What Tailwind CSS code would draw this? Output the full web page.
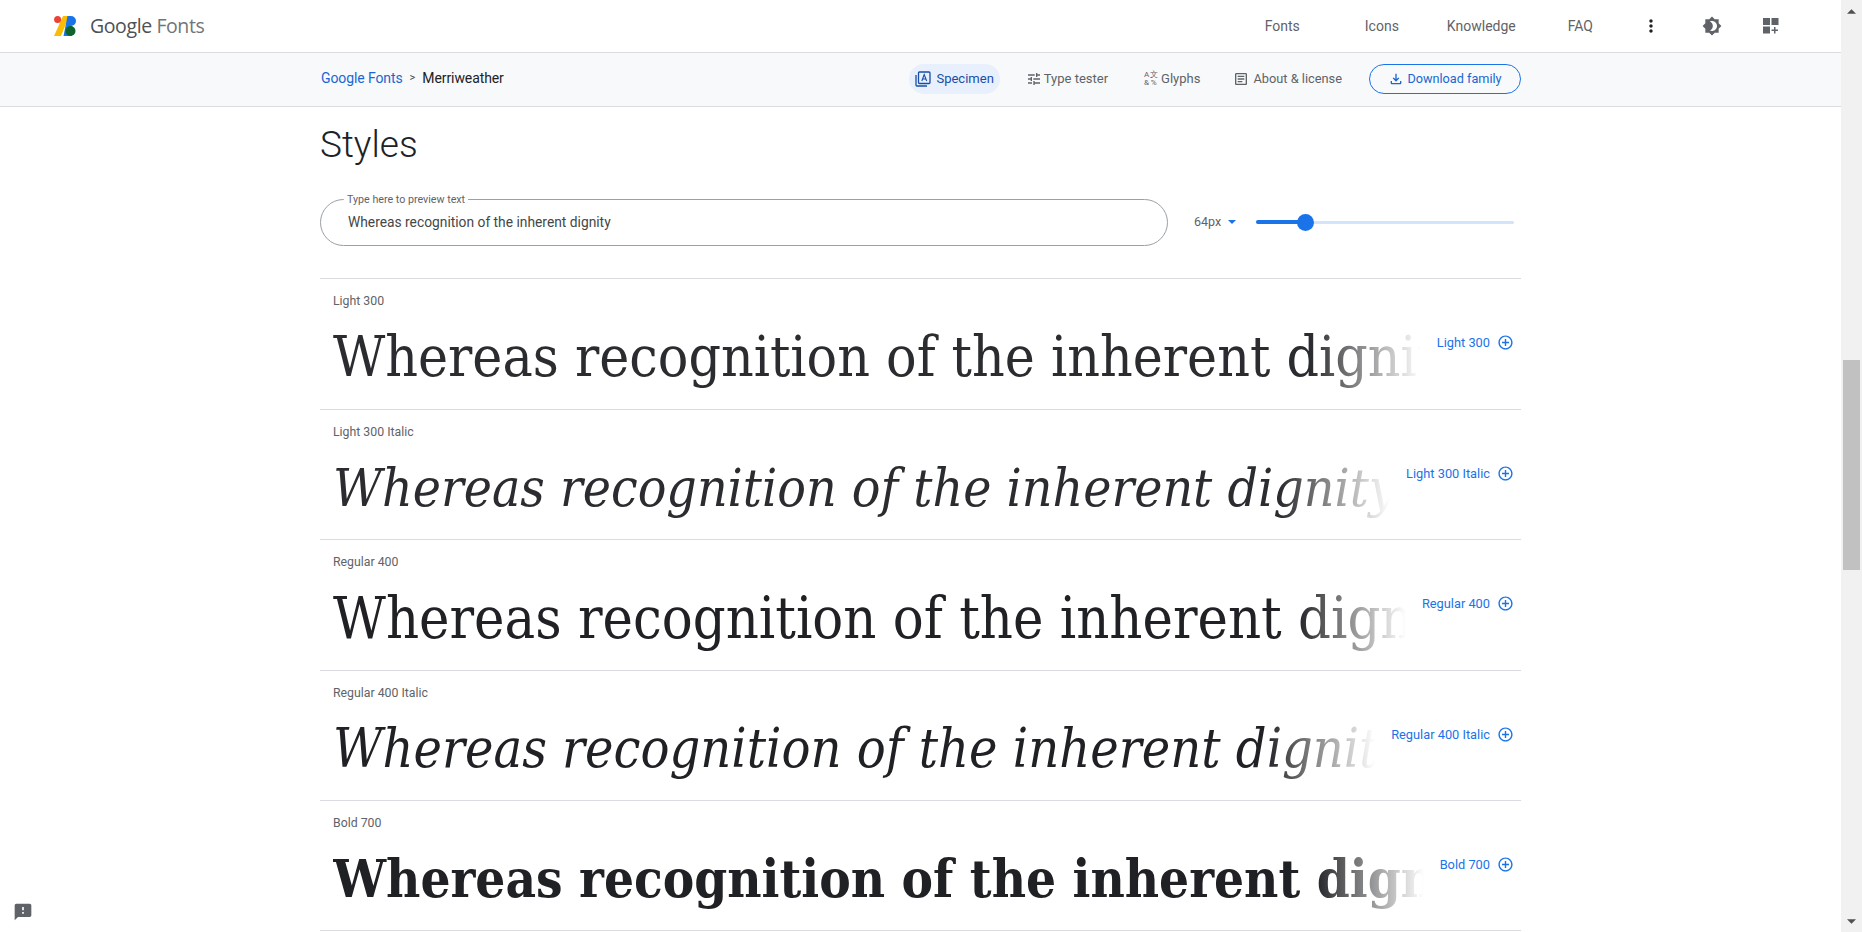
<!DOCTYPE html>
<html lang="en">
<head>
    <meta charset="UTF-8">
    <title>Merriweather - Google Fonts</title>
    <script src="https://cdn.jsdelivr.net/npm/@tailwindcss/browser@4"></script>
</head>
<body class="bg-white font-['Roboto',sans-serif] overflow-hidden">
<div class="flex h-[932px] relative">
    <div class="flex-1 min-w-0 flex flex-col">
        <!-- Top bar -->
        <header class="h-[53px] border-b border-[#dadce0] flex items-center pl-[54px] text-[#5f6368]">
            <svg class="w-[22px] h-[22px]" viewBox="0 0 22 22">
                <path fill="#fbbc04" d="M0 21 9 1h6L7 21z"/>
                <circle fill="#ea4335" cx="3.600" cy="4.600" r="3.500"/>
                <path fill="#1a73e8" d="M13.500 1h3.500a5 5 0 0 1 0 10h1v10h-8.500z"/>
                <circle fill="#0d652d" cx="16.500" cy="16" r="5"/>
            </svg>
            <span class="ml-[14px] text-[19.500px] font-['Open_Sans',sans-serif] tracking-[-0.4px]"><span class="text-[#4d5156]">Google</span> <span class="text-[#70757a]">Fonts</span></span>
            <nav class="ml-auto flex items-center text-[14px]">
                <a class="mr-[65px]">Fonts</a>
                <a class="mr-[48px]">Icons</a>
                <a class="mr-[52px]">Knowledge</a>
                <a class="mr-[48px]">FAQ</a>
                <svg class="w-5 h-5 mr-[41px] text-[#202124]" viewBox="0 0 24 24" fill="currentColor"><path d="M12 8c1.100 0 2-.9 2-2s-.9-2-2-2-2 .9-2 2 .9 2 2 2zm0 2c-1.100 0-2 .9-2 2s.9 2 2 2 2-.9 2-2-.9-2-2-2zm0 6c-1.100 0-2 .9-2 2s.9 2 2 2 2-.9 2-2-.9-2-2-2z"/></svg>
                <svg class="w-5 h-5 mr-[41px]" viewBox="0 0 24 24" fill="currentColor"><path d="M20 8.690V4h-4.690L12 .69 8.690 4H4v4.690L.69 12 4 15.310V20h4.690L12 23.310 15.310 20H20v-4.690L23.310 12 20 8.690zM12 18c-.89 0-1.740-.2-2.500-.55C11.560 16.500 13 14.420 13 12s-1.440-4.500-3.500-5.450C10.260 6.200 11.110 6 12 6c3.310 0 6 2.690 6 6s-2.690 6-6 6z"/></svg>
                <svg class="w-4 h-4 mr-[62px]" viewBox="0 0 16 16" fill="currentColor"><rect width="7" height="7"/><rect x="8.500" width="7" height="7"/><rect y="8.500" width="7" height="7"/><path d="M11 9h1.500v2.500H15V13h-2.500v2.500H11V13H8.500v-1.500H11z"/></svg>
            </nav>
        </header>

        <!-- Sub nav -->
        <div class="h-[54px] bg-[#f8f9fa] border-b border-[#dadce0] shrink-0">
            <div class="w-[1201px] ml-[320px] h-full pb-[2px] flex items-center text-[13px] text-[#5f6368]">
                <span class="text-[#1967d2] text-[14px] tracking-[-0.1px] ml-[1px]">Google Fonts</span>
                <span class="mx-[7px] text-[11px] text-[#3c4043]">&gt;</span>
                <span class="text-[#202124] text-[14px] tracking-[-0.1px]">Merriweather</span>
                <div class="ml-auto flex items-center">
                    <span class="flex items-center h-[30px] px-[6px] rounded-full bg-[#e8f0fe] text-[#174ea6] mr-[26px]">
                        <svg class="w-4 h-4 mr-[5px]" viewBox="0 0 16 16" fill="none" stroke="currentColor" stroke-width="1.300"><rect x="3.500" y="1" width="11.500" height="11.500" rx="1"/><path d="M1 4v10a1 1 0 0 0 1 1h10"/><path d="M6.800 10 9.200 3.500 11.700 10M7.700 8h3" stroke-width="1.100"/></svg>
                        Specimen
                    </span>
                    <span class="flex items-center mr-[35px]">
                        <svg class="w-4 h-4 mr-[2px]" viewBox="0 0 24 24" fill="currentColor"><path d="M3 17v2h6v-2H3zM3 5v2h10V5H3zm10 16v-2h8v-2h-8v-2h-2v6h2zM7 9v2H3v2h4v2h2V9H7zm14 4v-2H11v2h10zm-6-4h2V7h4V5h-4V3h-2v6z"/></svg>
                        Type tester
                    </span>
                    <span class="flex items-center mr-[33px]">
                        <span class="grid grid-cols-2 w-[14px] mr-[4px] text-[8px] leading-[8px] text-center"><span>A</span><span>文</span><span>&amp;</span><span>%</span></span>
                        Glyphs
                    </span>
                    <span class="flex items-center mr-[27px] text-[12.800px]">
                        <svg class="w-4 h-4 mr-[4px]" viewBox="0 0 24 24" fill="currentColor"><path d="M19 5v14H5V5h14m0-2H5c-1.100 0-2 .9-2 2v14c0 1.100.9 2 2 2h14c1.100 0 2-.9 2-2V5c0-1.100-.9-2-2-2z"/><path d="M14 17H7v-2h7v2zm3-4H7v-2h10v2zm0-4H7V7h10v2z"/></svg>
                        About &amp; license
                    </span>
                    <span class="flex items-center justify-center w-[152px] h-[30px] rounded-full border border-[#1a73e8] text-[#1967d2] text-[12.700px]">
                        <svg class="w-4 h-4 mr-[3px]" viewBox="0 0 24 24" fill="currentColor"><path d="M18 15v3H6v-3H4v3c0 1.100.9 2 2 2h12c1.100 0 2-.9 2-2v-3h-2zm-1-4-1.410-1.410L13 12.170V4h-2v8.170L8.410 9.590 7 11l5 5 5-5z"/></svg>
                        Download family
                    </span>
                </div>
            </div>
        </div>

        <!-- Content -->
        <main class="w-[1201px] ml-[320px]">
            <h2 class="text-[37px] leading-[44px] font-light text-[#202124] mt-[16px]">Styles</h2>

            <div class="flex items-center mt-[31px] h-[48px]">
                <div class="relative w-[848px] h-[47px] rounded-full border border-[#9aa0a6] flex items-center pl-[27px] text-[13.800px] text-[#444746]">
                    <span class="absolute left-[26px] -top-[6px] bg-white px-[3px] -ml-[3px] text-[10.700px] leading-[11px] text-[#5f6368]">Type here to preview text</span>
                    Whereas recognition of the inherent dignity
                </div>
                <span class="ml-[26px] text-[12.500px] text-[#5f6368]">64px</span>
                <svg class="w-[8px] h-[4px] ml-[7px]" viewBox="0 0 10 5" fill="#1a73e8"><path d="M0 0h10L5 5z"/></svg>
                <div class="relative ml-[20px] w-[258px] h-[3px] rounded-full bg-[#d2e3fc]">
                    <div class="h-[4px] w-[48px] -mt-[0.500px] rounded-full bg-[#1a73e8]"></div>
                    <div class="absolute left-[41px] -top-[7px] w-[17px] h-[17px] rounded-full bg-[#1a73e8]"></div>
                </div>
            </div>

            <div class="mt-[32px]">
                <!-- Style rows -->
                <section class="h-[130.500px] border-t border-[#dadce0] pl-[13px] pr-[7px]">
                    <p class="pt-[14px] text-[12.300px] leading-[16px] text-[#5f6368]">Light 300</p>
                    <div class="flex items-start mt-[10px]">
                        <div class="flex-1 min-w-0 overflow-hidden whitespace-nowrap font-['DejaVu_Serif_Condensed','DejaVu_Serif',serif] text-[#2b2c2f] text-[56.500px] leading-[76px] [mask-image:linear-gradient(to_right,black_calc(100%-110px),transparent)]">Whereas recognition of the inherent dignity</div>
                        <div class="flex items-center shrink-0 ml-[16px] mt-[14px] text-[12.800px] text-[#1a73e8]">Light 300
                            <svg class="w-[17px] h-[17px] ml-[7px]" viewBox="0 0 24 24" fill="currentColor"><path d="M13 7h-2v4H7v2h4v4h2v-4h4v-2h-4V7zm-1-5C6.480 2 2 6.480 2 12s4.480 10 10 10 10-4.480 10-10S17.520 2 12 2zm0 18c-4.410 0-8-3.590-8-8s3.590-8 8-8 8 3.590 8 8-3.590 8-8 8z"/></svg>
                        </div>
                    </div>
                </section>
                <section class="h-[130.500px] border-t border-[#dadce0] pl-[13px] pr-[7px]">
                    <p class="pt-[14px] text-[12.300px] leading-[16px] text-[#5f6368]">Light 300 Italic</p>
                    <div class="flex items-start mt-[10px]">
                        <div class="flex-1 min-w-0 overflow-hidden whitespace-nowrap font-['DejaVu_Serif_Condensed','DejaVu_Serif',serif] italic text-[#2b2c2f] text-[53px] leading-[76px] [mask-image:linear-gradient(to_right,black_calc(100%-110px),transparent)]">Whereas recognition of the inherent dignity</div>
                        <div class="flex items-center shrink-0 ml-[16px] mt-[14px] text-[12.800px] text-[#1a73e8]">Light 300 Italic
                            <svg class="w-[17px] h-[17px] ml-[7px]" viewBox="0 0 24 24" fill="currentColor"><path d="M13 7h-2v4H7v2h4v4h2v-4h4v-2h-4V7zm-1-5C6.480 2 2 6.480 2 12s4.480 10 10 10 10-4.480 10-10S17.520 2 12 2zm0 18c-4.410 0-8-3.590-8-8s3.590-8 8-8 8 3.590 8 8-3.590 8-8 8z"/></svg>
                        </div>
                    </div>
                </section>
                <section class="h-[130.500px] border-t border-[#dadce0] pl-[13px] pr-[7px]">
                    <p class="pt-[14px] text-[12.300px] leading-[16px] text-[#5f6368]">Regular 400</p>
                    <div class="flex items-start mt-[10px]">
                        <div class="flex-1 min-w-0 overflow-hidden whitespace-nowrap font-['DejaVu_Serif_Condensed','DejaVu_Serif',serif] text-[#202124] text-[57.200px] leading-[76px] [mask-image:linear-gradient(to_right,black_calc(100%-110px),transparent)]">Whereas recognition of the inherent dignity</div>
                        <div class="flex items-center shrink-0 ml-[16px] mt-[14px] text-[12.800px] text-[#1a73e8]">Regular 400
                            <svg class="w-[17px] h-[17px] ml-[7px]" viewBox="0 0 24 24" fill="currentColor"><path d="M13 7h-2v4H7v2h4v4h2v-4h4v-2h-4V7zm-1-5C6.480 2 2 6.480 2 12s4.480 10 10 10 10-4.480 10-10S17.520 2 12 2zm0 18c-4.410 0-8-3.590-8-8s3.590-8 8-8 8 3.590 8 8-3.590 8-8 8z"/></svg>
                        </div>
                    </div>
                </section>
                <section class="h-[130.500px] border-t border-[#dadce0] pl-[13px] pr-[7px]">
                    <p class="pt-[14px] text-[12.300px] leading-[16px] text-[#5f6368]">Regular 400 Italic</p>
                    <div class="flex items-start mt-[10px]">
                        <div class="flex-1 min-w-0 overflow-hidden whitespace-nowrap font-['DejaVu_Serif_Condensed','DejaVu_Serif',serif] italic text-[#202124] text-[53.500px] leading-[76px] [mask-image:linear-gradient(to_right,black_calc(100%-110px),transparent)]">Whereas recognition of the inherent dignity</div>
                        <div class="flex items-center shrink-0 ml-[16px] mt-[14px] text-[12.800px] text-[#1a73e8]">Regular 400 Italic
                            <svg class="w-[17px] h-[17px] ml-[7px]" viewBox="0 0 24 24" fill="currentColor"><path d="M13 7h-2v4H7v2h4v4h2v-4h4v-2h-4V7zm-1-5C6.480 2 2 6.480 2 12s4.480 10 10 10 10-4.480 10-10S17.520 2 12 2zm0 18c-4.410 0-8-3.590-8-8s3.590-8 8-8 8 3.590 8 8-3.590 8-8 8z"/></svg>
                        </div>
                    </div>
                </section>
                <section class="h-[130.500px] border-y border-[#dadce0] pl-[13px] pr-[7px]">
                    <p class="pt-[14px] text-[12.300px] leading-[16px] text-[#5f6368]">Bold 700</p>
                    <div class="flex items-start mt-[10px]">
                        <div class="flex-1 min-w-0 overflow-hidden whitespace-nowrap font-['DejaVu_Serif_Condensed','DejaVu_Serif',serif] font-bold text-[#202124] text-[52.500px] leading-[76px] [mask-image:linear-gradient(to_right,black_calc(100%-110px),transparent)]">Whereas recognition of the inherent dignity</div>
                        <div class="flex items-center shrink-0 ml-[16px] mt-[14px] text-[12.800px] text-[#1a73e8]">Bold 700
                            <svg class="w-[17px] h-[17px] ml-[7px]" viewBox="0 0 24 24" fill="currentColor"><path d="M13 7h-2v4H7v2h4v4h2v-4h4v-2h-4V7zm-1-5C6.480 2 2 6.480 2 12s4.480 10 10 10 10-4.480 10-10S17.520 2 12 2zm0 18c-4.410 0-8-3.590-8-8s3.590-8 8-8 8 3.590 8 8-3.590 8-8 8z"/></svg>
                        </div>
                    </div>
                </section>
            </div>
        </main>
    </div>

    <!-- Scrollbar -->
    <aside class="w-[21px] shrink-0 bg-[#f1f1f1] flex flex-col items-center">
        <svg class="w-[9px] h-[5px] mt-[9px]" viewBox="0 0 10 5" fill="#505050"><path d="M5 0l5 5H0z"/></svg>
        <div class="w-[17px] h-[210px] mt-[346px] bg-[#c1c1c1]"></div>
        <svg class="w-[9px] h-[5px] mt-auto mb-[8px]" viewBox="0 0 10 5" fill="#505050"><path d="M0 0h10L5 5z"/></svg>
    </aside>

    <!-- Feedback button -->
    <svg class="absolute left-[13px] bottom-[10px] w-[20px] h-[20px] text-[#5f6368]" viewBox="0 0 24 24" fill="currentColor"><path d="M20 2H4c-1.100 0-1.990.9-1.990 2L2 22l4-4h14c1.100 0 2-.9 2-2V4c0-1.100-.9-2-2-2zm-7 12h-2v-2h2v2zm0-4h-2V6h2v4z"/></svg>
</div>
</body>
</html>
